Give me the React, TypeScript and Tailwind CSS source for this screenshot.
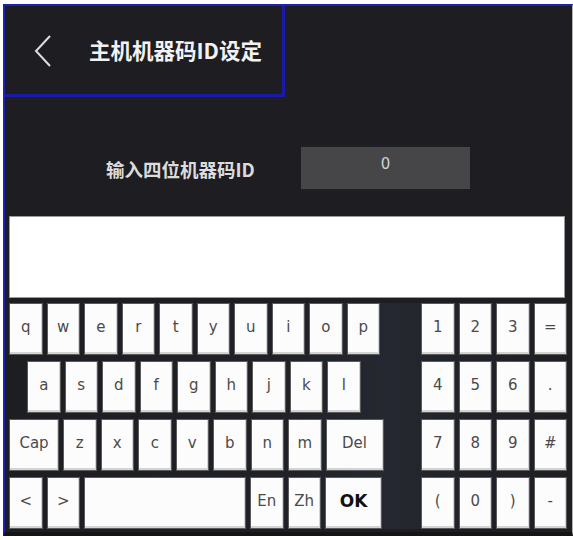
import React from 'react';

const keyFont = { fontFamily: '"DejaVu Sans", "Liberation Sans", sans-serif' };
const cjkFont = { fontFamily: '"Noto Sans CJK SC", "Noto Sans", sans-serif' };

const Key: React.FC<{ label?: string; w?: string; bold?: boolean }> = ({ label = '', w = 'w-[33.5px]', bold }) => (
    <div
        className={`${w} h-full shrink-0 bg-[#fcfcfc] border border-[#5a5a5a] shadow-[inset_-1px_-2px_0_#d4d4d4] flex items-center justify-center pb-[3px] ${bold ? 'text-[17px] font-bold text-[#111]' : 'text-[15px] text-[#4a4a4a]'}`}
        style={keyFont}
    >
        {label}
    </div>
);

const letterRows = [
    'qwertyuiop'.split(''),
    'asdfghjkl'.split(''),
    'zxcvbnm'.split(''),
];

const numRows = [
    ['1', '2', '3', '='],
    ['4', '5', '6', '.'],
    ['7', '8', '9', '#'],
    ['(', '0', ')', '-'],
];

export default function App() {
    return (
        <div className="w-[573px] h-[540px] bg-white pt-[4px] pl-[3px] overflow-hidden">
            <div className="w-[570px] h-[532px] bg-[#1e1e22] border-l-2 border-t-2 border-[#2020b0] border-r border-r-[#b0b0b0] border-b-[4px] border-b-[#141416] flex flex-col">
                {/* header */}
                <div className="w-[280px] h-[91px] shrink-0 border-r-[3px] border-b-[3px] border-[#1a1aa8] flex items-center">
                    <svg width="20" height="34" viewBox="0 0 20 34" className="ml-[29px] mt-[2px]">
                        <path d="M16 2 L2 17 L16 32" fill="none" stroke="#dedede" strokeWidth="2" />
                    </svg>
                    <div className="ml-[35px] text-[21.5px] font-bold text-[#f2f2f2] leading-none" style={cjkFont}>
                        主机机器码ID设定
                    </div>
                </div>

                {/* id input row */}
                <div className="mt-[50px] h-[42px] flex items-center shrink-0">
                    <div className="ml-[101px] w-[195px] text-[18.5px] font-bold text-[#dcdcdc] mt-[4px]" style={cjkFont}>
                        输入四位机器码ID
                    </div>
                    <div className="w-[169px] h-full bg-[#464648] flex justify-center pt-[6px] text-[15px] text-[#d0d0d0]" style={keyFont}>
                        0
                    </div>
                </div>

                {/* text area */}
                <div className="ml-[4px] mt-[27px] w-[556px] h-[82px] shrink-0 bg-white border border-[#9a9a9a]" />

                {/* keyboard */}
                <div className="flex mt-[5px] bg-[linear-gradient(90deg,#1d1e22_0%,#202228_50%,#252830_68%,#202228_82%,#1e1f23_100%)]">
                    <div className="ml-[4px] w-[378px] flex flex-col gap-[6px]">
                        <div className="h-[52px] flex gap-[4px]">
                            {letterRows[0].map(k => <Key key={k} label={k} />)}
                        </div>
                        <div className="h-[52px] flex gap-[4px] pl-[18px]">
                            {letterRows[1].map(k => <Key key={k} label={k} />)}
                        </div>
                        <div className="h-[52px] flex gap-[4px]">
                            <Key label="Cap" w="w-[50px]" />
                            {letterRows[2].map(k => <Key key={k} label={k} />)}
                            <Key label="Del" w="w-[58px]" />
                        </div>
                        <div className="h-[52px] flex gap-[4px]">
                            <Key label="<" />
                            <Key label=">" />
                            <Key w="w-[162px]" />
                            <Key label="En" />
                            <Key label="Zh" />
                            <Key label="OK" w="w-[57px]" bold />
                        </div>
                    </div>
                    <div className="ml-[34px] flex flex-col gap-[6px]">
                        {numRows.map((row, i) => (
                            <div key={i} className="h-[52px] flex gap-[4px]">
                                {row.map(k => <Key key={k} label={k} />)}
                            </div>
                        ))}
                    </div>
                </div>
            </div>
        </div>
    );
}
